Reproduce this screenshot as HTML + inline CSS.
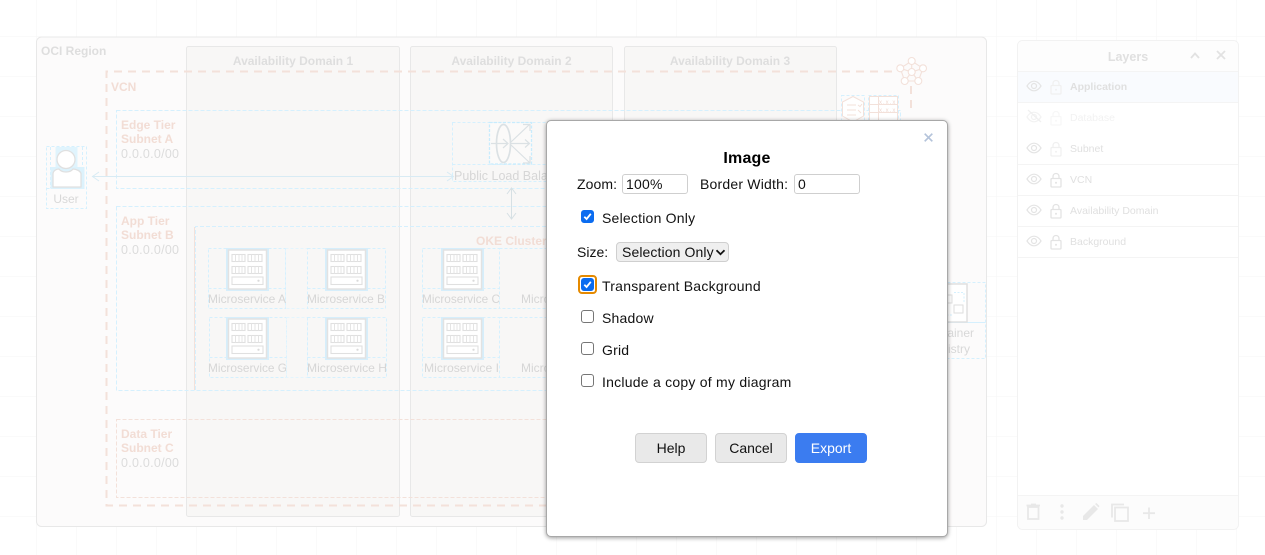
<!DOCTYPE html>
<html><head><meta charset="utf-8">
<style>
html,body{margin:0;padding:0;background:#fff;width:1265px;height:555px;overflow:hidden;font-family:"Liberation Sans",sans-serif}
svg.bg{position:absolute;left:0;top:0}
svg text{font-family:"Liberation Sans",sans-serif}
.t{position:absolute;font-size:14px;color:#111;white-space:nowrap;line-height:16px}
#dlg{position:absolute;left:546px;top:120px;width:400px;height:415px;background:#fff;border:1px solid #a8a8a8;border-radius:5px;box-shadow:0 1px 4px rgba(0,0,0,.4)}
.inp{position:absolute;box-sizing:border-box;height:20px;width:66px;top:174px;border:1px solid #cfcfcf;border-radius:3px;background:#fff;font-size:14px;line-height:18px;padding-left:3px;color:#111;letter-spacing:.2px}
.cb{position:absolute;box-sizing:border-box;left:581px;width:13px;height:13px;border:1px solid #767676;border-radius:3px;background:#fff}
.cb.on{background:#0b6cf0;border-color:#0b6cf0}
.cb svg{position:absolute;left:0;top:0}
.btn{position:absolute;box-sizing:border-box;top:433px;width:72px;height:30px;border:1px solid #d2d2d2;border-radius:4px;background:#e9e9e9;text-align:center;font-size:14px;line-height:28px;color:#111}
</style></head><body>
<svg class="bg" width="1265" height="555" viewBox="0 0 1265 555" xmlns="http://www.w3.org/2000/svg">
<defs>
<pattern id="g" width="40" height="40" patternUnits="userSpaceOnUse" x="36.5" y="36.5">
<path d="M40 0H0V40" fill="none" stroke="#f5f5f5" stroke-width="1"/>
</pattern>
<symbol id="srv" width="43" height="43" viewBox="0 0 43 43">
<rect x="0" y="0" width="43" height="43" fill="#d6eefb"/>
<rect x="2.5" y="2" width="38" height="39" fill="#fff" stroke="#e2e2e2" stroke-width="1.5"/>
<g fill="#fff" stroke="#e0e0e0" stroke-width="1.1">
<rect x="6" y="6.5" width="13" height="7"/><rect x="22" y="6.5" width="14" height="7"/>
<rect x="6" y="18.5" width="13" height="7"/><rect x="22" y="18.5" width="14" height="7"/>
<rect x="6" y="29" width="31" height="7.5"/></g>
<path d="M9.5 6.5v7M13 6.5v7M16 6.5v7M25.5 6.5v7M29 6.5v7M32.5 6.5v7M9.5 18.5v7M13 18.5v7M16 18.5v7M25.5 18.5v7M29 18.5v7M32.5 18.5v7" stroke="#e4e4e4" fill="none"/>
<circle cx="32.5" cy="32.7" r="1.1" fill="#dadada"/>
</symbol>
<symbol id="eye" width="16" height="12" viewBox="0 0 16 12">
<path d="M1 6C3 2.8 5.3 1.2 8 1.2S13 2.8 15 6C13 9.2 10.700 10.800 8 10.800S3 9.200 1 6Z" fill="none" stroke="#e4e4e4" stroke-width="1.200"/>
<circle cx="8" cy="6" r="2.500" fill="none" stroke="#e4e4e4" stroke-width="1.200"/>
</symbol>
<symbol id="lock" width="12" height="16" viewBox="0 0 12 16">
<path d="M3 6.500V4.500C3 2.800 4.300 1.500 6 1.500S9 2.800 9 4.500V6.500" fill="none" stroke="currentColor" stroke-width="1.300"/>
<rect x="1" y="6.500" width="10" height="8.500" rx="1" fill="none" stroke="currentColor" stroke-width="1.300"/>
<circle cx="6" cy="10.700" r="1" fill="currentColor"/>
</symbol>
</defs>
<rect width="1265" height="555" fill="#fff"/>
<rect width="1265" height="555" fill="url(#g)"/>
<rect x="36.500" y="37" width="950" height="489.500" rx="5" fill="#fcfbfb" stroke="#e8e8e8" stroke-width="1"/>
<g fill="#f8f7f6" stroke="#e8e8e8">
<rect x="186.500" y="46.500" width="213" height="470" rx="2"/>
<rect x="410.500" y="46.500" width="202" height="470" rx="2"/>
<rect x="624.500" y="46.500" width="212" height="470" rx="2"/>
</g>
<path d="M892 71.500H106.500V505.500H560" fill="none" stroke="#f3e1da" stroke-width="2" stroke-dasharray="8 6"/>
<path d="M911 86V114" fill="none" stroke="#f3e1da" stroke-width="2" stroke-dasharray="8 6"/>
<g fill="none" stroke-width="1" stroke-dasharray="4 2">
<rect x="116.500" y="110.500" width="784" height="78" stroke="#d5f0fe"/>
<rect x="116.500" y="206.500" width="784" height="184" stroke="#d5f0fe"/>
<rect x="116.500" y="419.500" width="784" height="78" stroke="#f3e1da"/>
<path d="M195.500 390V226.500H900" stroke="#d5f0fe"/>
</g>
<path d="M194.500 227V390" stroke="#f3e1da" fill="none"/>
<!-- user -->
<g fill="none" stroke="#d5f0fe" stroke-dasharray="3 2">
<rect x="46.500" y="146.500" width="40" height="62"/>
<path d="M46.500 188.500H86.500M50.500 147V188M82.500 147V188"/>
</g>
<rect x="55.500" y="147" width="22" height="20" fill="#e0f4fd"/>
<rect x="50.500" y="167" width="34" height="22" fill="#dcf2fc"/>
<circle cx="66" cy="159.500" r="9" fill="#fff" stroke="#e0e0e0" stroke-width="1.300"/>
<path d="M53 187V174C53 171 56 169 59 169C62 173 70 173 73 169C76 169 81 171 81 174V187Z" fill="#fff" stroke="#e0e0e0" stroke-width="1.300"/>
<text x="66" y="203" font-size="12" fill="#d8d8d8" text-anchor="middle">User</text>
<!-- arrows -->
<path d="M92 176.500H454M99 172L92.500 176.500L99 181M447 172L453.500 176.500L447 181" fill="none" stroke="#d8ebf4" stroke-width="1"/>
<path d="M511.500 188V219M507 194L511.500 188L516 194M507 213L511.500 219L516 213" fill="none" stroke="#d6e0e4" stroke-width="1"/>
<!-- load balancer -->
<g fill="none" stroke="#d5f0fe" stroke-dasharray="3 2">
<rect x="452.500" y="122.500" width="110" height="59"/>
<path d="M452.500 164.500H560"/>
</g>
<rect x="489.500" y="122.500" width="42" height="41.500" fill="#fff" fill-opacity=".4" stroke="#c8ecfd" stroke-dasharray="3 1.500" stroke-width="1.300"/>
<ellipse cx="503.500" cy="143.500" rx="7" ry="19" fill="none" stroke="#dbe1e4" stroke-width="1.700"/>
<path d="M491 143.500H507M503 139L508 143.500L503 148M511 143.500H529M525 139.500L529.500 143.500L525 147.500M511 142L530 124M523 124.500H530V131M511 145L530 163M523 163H530V156" fill="none" stroke="#dbe1e4" stroke-width="1.200"/>
<text x="454" y="180" font-size="12.500" fill="#d6d6d6">Public Load Balancer</text>
<!-- microservice groups -->
<g fill="none" stroke="#d5f0fe" stroke-dasharray="3 2">
<rect x="208.500" y="248.500" width="77" height="60"/>
<rect x="285.500" y="248.500" width="22" height="60" stroke="#e4f5fd"/>
<rect x="307.500" y="248.500" width="78" height="60"/>
<rect x="209.500" y="317.500" width="77" height="60"/>
<rect x="286.500" y="317.500" width="21" height="60" stroke="#e4f5fd"/>
<rect x="307.500" y="317.500" width="79" height="60"/>
<path d="M208.500 288.500H285.500M307.500 288.500H385.500M209.500 357.500H286.500M307.500 357.500H386.500"/>
<rect x="422.500" y="248.500" width="77" height="60"/>
<rect x="422.500" y="317.500" width="77" height="60"/>
<path d="M422.500 288.500H499.500M422.500 357.500H499.500M499.500 248.500H560V308.500H499.500M499.500 317.500H560V377.500H499.500"/>
</g>
<use href="#srv" x="226" y="248"/><use href="#srv" x="325" y="248"/><use href="#srv" x="441" y="248"/>
<use href="#srv" x="226" y="317"/><use href="#srv" x="325" y="317"/><use href="#srv" x="441" y="317"/>
<g font-size="12" fill="#d6d6d6">
<text x="208" y="303" textLength="78" lengthAdjust="spacingAndGlyphs">Microservice A</text>
<text x="307" y="303" textLength="78" lengthAdjust="spacingAndGlyphs">Microservice B</text>
<text x="422" y="303" textLength="78" lengthAdjust="spacingAndGlyphs">Microservice C</text>
<text x="521" y="303">Microservice D</text>
<text x="208" y="372" textLength="79" lengthAdjust="spacingAndGlyphs">Microservice G</text>
<text x="307" y="372" textLength="80" lengthAdjust="spacingAndGlyphs">Microservice H</text>
<text x="424" y="372" textLength="75" lengthAdjust="spacingAndGlyphs">Microservice I</text>
<text x="521" y="372">Microservice J</text>
</g>
<!-- top right shapes -->
<g fill="#fff" stroke="#f3e1da" stroke-width="1.100">
<path d="M911.700 61L900.300 68.300L904.700 81H918.300L923 68.300Z M911.700 61V72M900.300 68.300L911.700 72L923 68.300M904.700 81L911.700 72L918.300 81" fill="none"/>
<circle cx="911.700" cy="61" r="3.500"/><circle cx="900.300" cy="68.300" r="3.500"/><circle cx="923" cy="68.300" r="3.500"/><circle cx="904.700" cy="81" r="3.500"/><circle cx="918.300" cy="81" r="3.500"/><circle cx="911.700" cy="72" r="3.500"/>
</g>
<rect x="841.500" y="95.500" width="23" height="30" fill="none" stroke="#d5f0fe" stroke-dasharray="3 2"/>
<rect x="868.500" y="95.500" width="30" height="30" fill="none" stroke="#d5f0fe" stroke-dasharray="3 2"/>
<path d="M842.500 102L853 96.500L863.500 102V116L853 122L842.500 116Z" fill="#fff" stroke="#f3e1da"/>
<path d="M847 105H856M847 110H856M847 115H856M858 105l2 1.500l2-2.500M858 110l3 3" fill="none" stroke="#f3e1da"/>
<rect x="869.500" y="96.500" width="28" height="24" fill="#fff" stroke="#f3e1da"/>
<path d="M869.500 104.500H897.500M869.500 112.500H897.500M869.500 120.500H897.500M878.500 96.500V122" fill="none" stroke="#f3e1da"/>
<text x="879" y="104" font-size="6" fill="#f0dad2" letter-spacing="1">x.x.x</text>
<text x="879" y="112" font-size="6" fill="#f0dad2" letter-spacing="1">x.x.x</text>
<!-- registry -->
<g fill="none" stroke="#d5f0fe" stroke-dasharray="3 2">
<rect x="947.500" y="282.500" width="38" height="40"/>
<rect x="947.500" y="322.500" width="38" height="36"/>
</g>
<rect x="930" y="284" width="37" height="38" fill="#fff" stroke="#e0e0e0" stroke-width="1.500"/>
<rect x="942" y="295" width="10" height="8" fill="#fff" stroke="#dedede"/>
<rect x="954" y="305" width="9" height="8" fill="#fff" stroke="#dedede"/>
<path d="M954 292.500H964V303M946 305V315H952" fill="none" stroke="#d5f0fe" stroke-dasharray="2 1.500"/>
<text x="974" y="337" font-size="12" fill="#d8d8d8" text-anchor="end">Container</text>
<text x="970" y="353" font-size="12" fill="#d8d8d8" text-anchor="end">Registry</text>
<!-- labels -->
<g font-size="12" font-weight="700">
<text x="41" y="55" fill="#dedede">OCI Region</text>
<text x="293" y="65" fill="#dedede" text-anchor="middle">Availability Domain 1</text>
<text x="511.500" y="65" fill="#dedede" text-anchor="middle">Availability Domain 2</text>
<text x="730" y="65" fill="#dedede" text-anchor="middle">Availability Domain 3</text>
<g fill="#f2ddd5">
<text x="111" y="91">VCN</text>
<text x="121" y="129">Edge Tier</text><text x="121" y="143">Subnet A</text>
<text x="121" y="225">App Tier</text><text x="121" y="239">Subnet B</text>
<text x="121" y="438">Data Tier</text><text x="121" y="452">Subnet C</text>
<text x="476" y="245">OKE Cluster</text>
</g>
</g>
<g font-size="12.500" fill="#dcdcdc">
<text x="121" y="158" textLength="58">0.0.0.0/00</text><text x="121" y="254" textLength="58">0.0.0.0/00</text><text x="121" y="467" textLength="58">0.0.0.0/00</text>
</g>
<!-- layers panel -->
<rect x="1017.500" y="40.500" width="221" height="489" rx="5" fill="#fff" stroke="#f2f2f2"/>
<path d="M1018 72V45.500A5 5 0 0 1 1023 41H1233A5 5 0 0 1 1238 45.500V72Z" fill="#fdfdfd"/>
<rect x="1018" y="72" width="220" height="30.500" fill="#f9fbfe"/>
<path d="M1018 495.500H1238V524A5 5 0 0 1 1233 529H1023A5 5 0 0 1 1018 524Z" fill="#fcfcfc"/>
<path d="M1018 71.500H1238M1018 102.500H1238M1018 164.500H1238M1018 195.500H1238M1018 226.500H1238M1018 257.500H1238M1018 495.500H1238" stroke="#f4f4f4" fill="none"/>
<text x="1128" y="61" font-size="12.500" font-weight="700" fill="#e0e0e0" text-anchor="middle">Layers</text>
<path d="M1191 58L1195 53.500L1199 58" fill="none" stroke="#e2e2e2" stroke-width="1.800"/>
<path d="M1217 51L1225 59M1225 51L1217 59" fill="none" stroke="#e2e2e2" stroke-width="1.800"/>
<use href="#eye" x="1026" y="80"/>
<g opacity=".45"><use href="#eye" x="1026" y="111"/></g>
<path d="M1028 110L1041 122" stroke="#f0f0f0" stroke-width="1.300" fill="none"/>
<use href="#eye" x="1026" y="142"/><use href="#eye" x="1026" y="173"/><use href="#eye" x="1026" y="204"/><use href="#eye" x="1026" y="235"/>
<use href="#lock" x="1050" y="79" style="color:#f0f0f0"/>
<use href="#lock" x="1050" y="110" style="color:#f7f7f7"/>
<use href="#lock" x="1050" y="141" style="color:#f0f0f0"/>
<use href="#lock" x="1050" y="172" style="color:#e3e3e3"/>
<use href="#lock" x="1050" y="203" style="color:#e3e3e3"/>
<use href="#lock" x="1050" y="234" style="color:#e3e3e3"/>
<g font-size="10.500" fill="#e0e0e0">
<text x="1070" y="90" font-weight="700">Application</text>
<text x="1070" y="121" fill="#f2f2f2">Database</text>
<text x="1070" y="152">Subnet</text>
<text x="1070" y="183">VCN</text>
<text x="1070" y="214">Availability Domain</text>
<text x="1070" y="245">Background</text>
</g>
<!-- layer footer icons -->
<g fill="none" stroke="#e8e8e8" stroke-width="1.800">
<path d="M1028 507H1038.500V519H1028ZM1026.500 505.500H1040M1031 504.500H1036"/>
<path d="M1112 517.500V504.500H1124"/>
<rect x="1115" y="507.500" width="13" height="13.500"/>
<path d="M1149 507.500V519M1143 513.200H1155"/>
</g>
<g fill="#e8e8e8">
<circle cx="1062" cy="506" r="1.700"/><circle cx="1062" cy="512" r="1.700"/><circle cx="1062" cy="518" r="1.700"/>
<path d="M1083 520V516L1094 505L1098 509L1087 520ZM1095 504L1096.500 503L1099.500 506L1098.500 507.500Z"/>
</g>
</svg>

<div id="dlg"></div>
<svg style="position:absolute;left:923px;top:132px" width="11" height="11" viewBox="0 0 11 11"><path d="M1.700 1.700L9.300 9.300M9.300 1.700L1.700 9.300" stroke="#b4c3da" stroke-width="1.700" fill="none"/></svg>
<div class="t" style="left:547px;width:400px;top:149px;text-align:center;font-weight:700;font-size:16px;line-height:18px;color:#000;letter-spacing:.2px;padding-top:1px">Image</div>
<div class="t" style="left:577px;top:176px;letter-spacing:.1px">Zoom:</div>
<div class="inp" style="left:622px">100%</div>
<div class="t" style="left:700px;top:176px;letter-spacing:.2px">Border Width:</div>
<div class="inp" style="left:794px">0</div>

<div class="cb on" style="top:210px"><svg width="11" height="11" viewBox="0 0 11 11"><path d="M2.300 5.700L4.600 8L8.800 2.800" stroke="#fff" stroke-width="1.800" fill="none"/></svg></div>
<div class="t" style="left:602px;top:210px;letter-spacing:.22px">Selection Only</div>

<div class="t" style="left:577px;top:244px">Size:</div>
<div style="position:absolute;box-sizing:border-box;left:616px;top:242px;width:113px;height:20px;background:#efefef;border:1px solid #cfcfcf;border-radius:4px;font-size:14px;line-height:18px;padding-left:4px;color:#111;white-space:nowrap;letter-spacing:.1px"><span style="margin-left:1px">Selection Only</span></div>
<svg style="position:absolute;left:715px;top:249px" width="11" height="7" viewBox="0 0 11 7"><path d="M1.500 1.200L5.500 5.200L9.500 1.200" stroke="#111" stroke-width="1.800" fill="none"/></svg>

<div style="position:absolute;box-sizing:border-box;left:578px;top:275px;width:19px;height:19px;border:2.500px solid #e58a00;border-radius:4px"></div>
<div class="cb on" style="top:278px"><svg width="11" height="11" viewBox="0 0 11 11"><path d="M2.300 5.700L4.600 8L8.800 2.800" stroke="#fff" stroke-width="1.800" fill="none"/></svg></div>
<div class="t" style="left:602px;top:278px;letter-spacing:.24px">Transparent Background</div>

<div class="cb" style="top:310px"></div>
<div class="t" style="left:602px;top:310px;letter-spacing:.2px">Shadow</div>
<div class="cb" style="top:342px"></div>
<div class="t" style="left:602px;top:342px;letter-spacing:.2px">Grid</div>
<div class="cb" style="top:374px"></div>
<div class="t" style="left:602px;top:374px;letter-spacing:.24px">Include a copy of my diagram</div>

<div class="btn" style="left:635px">Help</div>
<div class="btn" style="left:715px">Cancel</div>
<div class="btn" style="left:795px;background:#3b7cf0;border-color:#3b7cf0;color:#fff">Export</div>
</body></html>
